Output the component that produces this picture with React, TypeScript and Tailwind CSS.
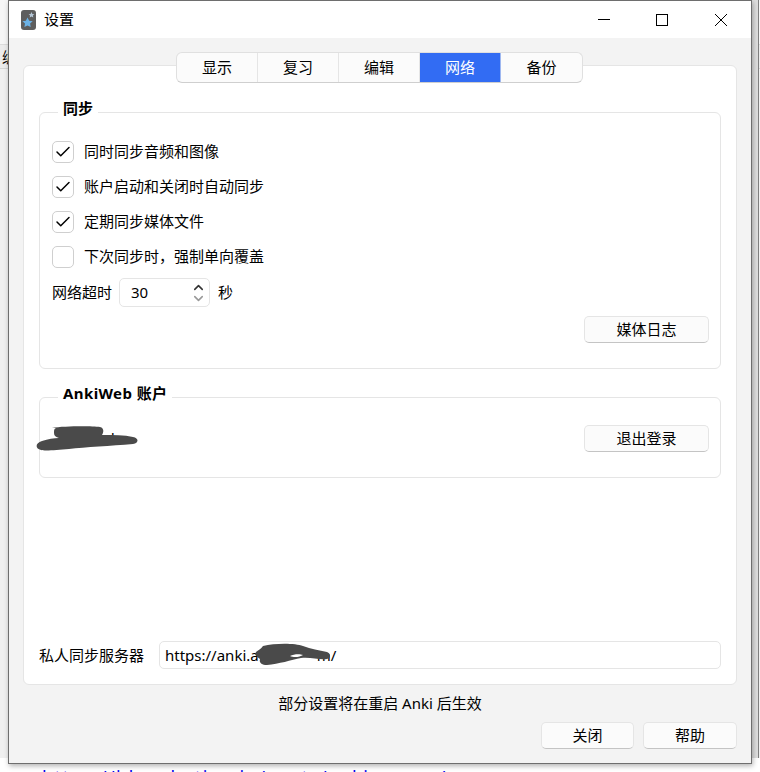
import { Check, ChevronDown, ChevronUp } from "lucide-react";

const font = "font-['Noto_Sans','Noto_Sans_CJK_SC',sans-serif]";

const TABS = ["显示", "复习", "编辑", "网络", "备份"];

const OPTIONS = [
  { label: "同时同步音频和图像", checked: true },
  { label: "账户启动和关闭时自动同步", checked: true },
  { label: "定期同步媒体文件", checked: true },
  { label: "下次同步时，强制单向覆盖", checked: false },
];

function Btn({ label, w }: { label: string; w: string }) {
  return (
    <button className={`${w} h-[27px] rounded-[5px] border border-[#e5e5e5] border-b-[#c4c4c4] bg-[#fbfbfb] text-[15px] text-black`}>
      {label}
    </button>
  );
}

function Option({ label, checked }: { label: string; checked: boolean }) {
  return (
    <div className="flex h-[35px] items-center gap-[10px]">
      <div className="flex size-[22px] items-center justify-center rounded-[5px] border border-[#cfcfcf] bg-white">
        {checked && <Check size={18} strokeWidth={2} className="text-black" />}
      </div>
      <span className="text-[15px] leading-none text-black">{label}</span>
    </div>
  );
}

function WinIcon() {
  return (
    <svg width="15" height="20" viewBox="0 0 15 20">
      <rect width="15" height="20" rx="3" fill="#5e5e5e" />
      <path d="M10.5 2l.9 1.9 2 .3-1.5 1.4.4 2-1.8-1-1.8 1 .4-2-1.5-1.4 2-.3z" fill="#b4c6d6" />
      <path d="M6.5 7.5l1.7 3.2 3.5.5-2.6 2.4.6 3.4-3.2-1.6-3.1 1.6.6-3.4L1.4 11.2l3.5-.5z" fill="#6cb2e6" />
    </svg>
  );
}

export default function App() {
  return (
    <div className={`${font} relative h-[772px] w-[760px] overflow-hidden bg-white`}>
      {/* window behind the dialog */}
      <div className="absolute inset-x-0 top-0 h-[758px] bg-[#f0f0f0]">
        <div className="h-[45px] border-b border-[#dcdcdc] bg-[#f6f6f6]" />
        <div className="h-[24px] border-b border-[#d5d5d5] bg-[#ececec] pt-[1px] pl-[2px] text-[15px] text-black">编</div>
        <div className="absolute top-0 right-[1px] bottom-0 w-px bg-[#808080]" />
        <div className="absolute top-0 right-[2px] bottom-0 w-[6px] bg-[#dedede]" />
      </div>
      <div className="absolute bottom-[-19px] left-[42px] text-lg tracking-[1.5px] whitespace-nowrap text-[#0000ee]">
        https://jdanabetian.in/posts/anki-server/
      </div>

      {/* dialog */}
      <div className="absolute top-0 left-[8px] flex h-[764px] w-[744px] flex-col border border-[#6e6e6e] bg-[#f3f3f3] shadow-[1px_2px_5px_rgba(0,0,0,0.3)]">
        <div className="flex h-[37px] items-center bg-white">
          <div className="ml-[12px] flex"><WinIcon /></div>
          <span className="ml-[8px] text-[15px] text-black">设置</span>
          <div className="ml-auto flex items-center">
            <svg width="14" height="14" viewBox="0 0 14 14" className="mr-[44px]"><path d="M1 6.5h12" stroke="#000" strokeWidth="1" /></svg>
            <svg width="14" height="14" viewBox="0 0 14 14" className="mr-[45px]"><rect x="1.5" y="1.5" width="11" height="11" fill="none" stroke="#000" /></svg>
            <svg width="14" height="14" viewBox="0 0 14 14" className="mr-[23px]"><path d="M1 1l12 12M13 1L1 13" stroke="#000" strokeWidth="1" /></svg>
          </div>
        </div>

        <div className="relative mx-[14px] mt-[27px] h-[620px] rounded-[6px] border border-[#e5e5e5] bg-white px-[15px] pt-[46px]">
          <div className="absolute -top-[14px] left-[152px] flex h-[31px] overflow-hidden rounded-[6px] border border-[#e0e0e0] border-b-[#cfcfcf] bg-[#fbfbfb]">
            {TABS.map((t, i) => (
              <div
                key={t}
                className={`flex w-[81px] items-center justify-center border-r text-[15px] last:border-r-0 ${i === 3 ? "border-[#9fb8f0] bg-[#326cf3] text-white" : "border-[#e5e5e5] text-black"}`}
              >
                {t}
              </div>
            ))}
          </div>

          <div className="relative h-[257px] rounded-[6px] border border-[#e5e5e5] pt-[21px] pr-[11px] pl-[12px]">
            <div className="absolute -top-[15px] left-[18px] bg-white px-[5px] text-[15px] leading-[20px] font-semibold text-black">同步</div>
            {OPTIONS.map((o) => (
              <Option key={o.label} {...o} />
            ))}
            <div className="mt-[4px] flex items-center text-[15px] text-black">
              <span>网络超时</span>
              <div className="ml-[7px] flex h-[29px] w-[91px] items-center justify-between rounded-[5px] border border-[#e5e5e5] pr-[3px] pl-[11px]">
                <span>30</span>
                <div className="flex flex-col items-center">
                  <ChevronUp size={15} strokeWidth={2.5} className="-mb-[2px] text-[#333333]" />
                  <ChevronDown size={15} strokeWidth={2.5} className="-mt-[2px] text-[#999999]" />
                </div>
              </div>
              <span className="ml-[8px]">秒</span>
            </div>
            <div className="mt-[9px] flex justify-end">
              <Btn label="媒体日志" w="w-[125px]" />
            </div>
          </div>

          <div className="relative mt-[28px] h-[81px] rounded-[6px] border border-[#e5e5e5] pt-[27px] pr-[11px] pl-[12px]">
            <div className="absolute -top-[15px] left-[18px] bg-white px-[5px] text-[15px] leading-[20px] font-bold tracking-[0.4px] text-black">AnkiWeb 账户</div>
            <div className="flex items-center justify-between">
              <span className="pl-[45px] text-[15px] leading-none text-black">ed</span>
              <Btn label="退出登录" w="w-[125px]" />
            </div>
            <svg width="102" height="26" viewBox="0 0 102 26" className="absolute top-[28px] -left-[4px]">
              <path d="M16 2C28 0 55 0 64 1c4 1 4 5 2 8 12 0 22 0 31 2 6 1 6 6 0 7-22 2-48 3-64 5-12 1-24 2-28 1-6-1-6-7 1-9 6-2 12-3 17-3-3-1-5-2-5-5 0-3 0-4 2-5z" fill="#4a4a4a" />
            </svg>
          </div>

          <div className="absolute inset-x-[15px] bottom-[15px] flex items-center text-[15px] text-black">
            <span className="w-[120px]">私人同步服务器</span>
            <div className="flex h-[28px] flex-1 items-center rounded-[5px] border border-[#e5e5e5] pl-[5px]">
              <span>https://anki.a</span>
              <span className="relative h-[20px] w-[58px]">
                <svg width="76" height="24" viewBox="0 0 76 24" className="absolute -top-[2px] -left-[4px]">
                  <path d="M8 3C20 0 40 0 48 3c8 3 16 4 24 6 4 2 4 6 0 7-8 1-16-2-26-1-10 2-22 6-34 7-6 0-8-3-7-6-2-2-6-3-4-7 2-2 5-3 7-6z" fill="#4a4a4a" />
                  <path d="M35 13c4-2 10-2 13-1-3 2-9 3-13 1z" fill="#ffffff" />
                </svg>
              </span>
              <span>m/</span>
            </div>
          </div>
        </div>

        <div className="mt-[7px] text-center text-[15px] text-black">部分设置将在重启 Anki 后生效</div>
        <div className="mt-[7px] mr-[14px] flex justify-end gap-[9px]">
          <Btn label="关闭" w="w-[93px]" />
          <Btn label="帮助" w="w-[94px]" />
        </div>
      </div>
    </div>
  );
}
